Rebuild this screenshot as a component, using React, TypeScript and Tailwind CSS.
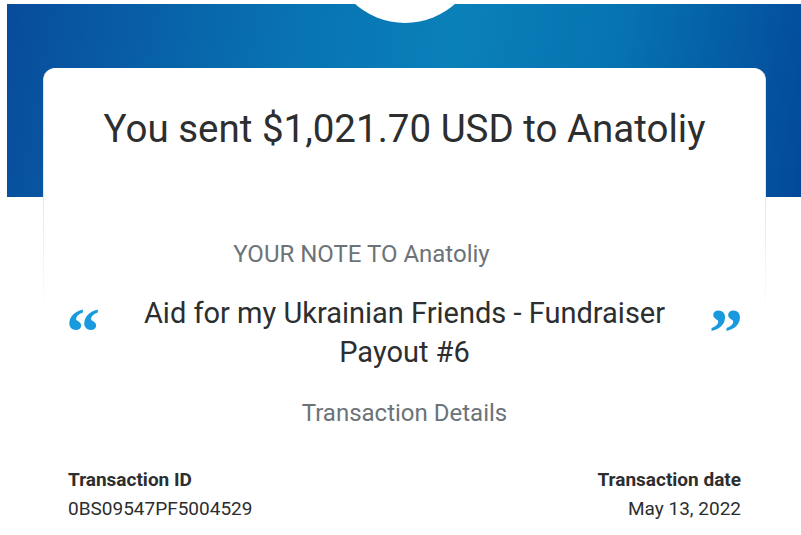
// Payment receipt — "You sent" confirmation card
const font = { fontFamily: "Roboto, 'Liberation Sans', sans-serif" };

function QuoteMark({ close }: { close?: boolean }) {
  return (
    <span
      className="text-[#1a9ade] text-[68px] leading-none font-bold select-none"
      style={{ fontFamily: "'Liberation Serif', 'DejaVu Serif', serif" }}
    >
      {close ? "\u201D" : "\u201C"}
    </span>
  );
}

export default function App() {
  return (
    <div className="w-[801px] h-[535px] overflow-hidden bg-white relative" style={font}>
      {/* blue header band */}
      <div className="ml-[7px] mt-[4px] h-[193px] relative overflow-hidden bg-[linear-gradient(100deg,#084c9c_0%,#0873b2_35%,#0a80b9_55%,#0673b0_75%,#03489a_100%)]">
        <div className="absolute left-[323px] -top-[131px] w-[150px] h-[150px] rounded-full bg-white" />
      </div>

      {/* card */}
      <div className="relative -mt-[129px] mx-[43px] w-[723px] rounded-[12px] bg-[linear-gradient(to_bottom,#e2e2e2_0%,#e6e6e6_50%,#ffffff_100%)] px-px h-[250px]">
        <div className="bg-white rounded-[12px] h-full">
          <h1 className="pt-[36px] text-center text-[38.5px] leading-[50px] text-[#2c2e2f]">
            You sent $1,021.70 USD to Anatoliy
          </h1>

          <div className="mt-[85px] text-center pr-[86px] text-[24px] leading-[30px] text-[#6c7378]">
            YOUR NOTE TO Anatoliy
          </div>

          <div className="mt-[25px] flex items-start px-[24px]">
            <div className="w-[40px] h-[40px] pt-[4px] -ml-[2px] overflow-visible">
              <QuoteMark />
            </div>
            <p className="flex-1 text-center text-[29px] leading-[39px] text-[#2c2e2f]">
              Aid for my Ukrainian Friends - Fundraiser
              <br />
              Payout #6
            </p>
            <div className="w-[40px] h-[40px] pt-[4px] -mr-[2px] flex justify-end overflow-visible">
              <QuoteMark close />
            </div>
          </div>

          <div className="mt-[26px] text-center text-[24px] leading-[30px] text-[#6c7378]">
            Transaction Details
          </div>

          <div className="mt-[37px] flex justify-between px-[24px] text-[19px] text-[#2c2e2f]">
            <div>
              <div className="font-bold leading-[29px]">Transaction ID</div>
              <div className="leading-[29px]">0BS09547PF5004529</div>
            </div>
            <div className="text-right">
              <div className="font-bold leading-[29px]">Transaction date</div>
              <div className="leading-[29px]">May 13, 2022</div>
            </div>
          </div>
        </div>
      </div>
    </div>
  );
}
